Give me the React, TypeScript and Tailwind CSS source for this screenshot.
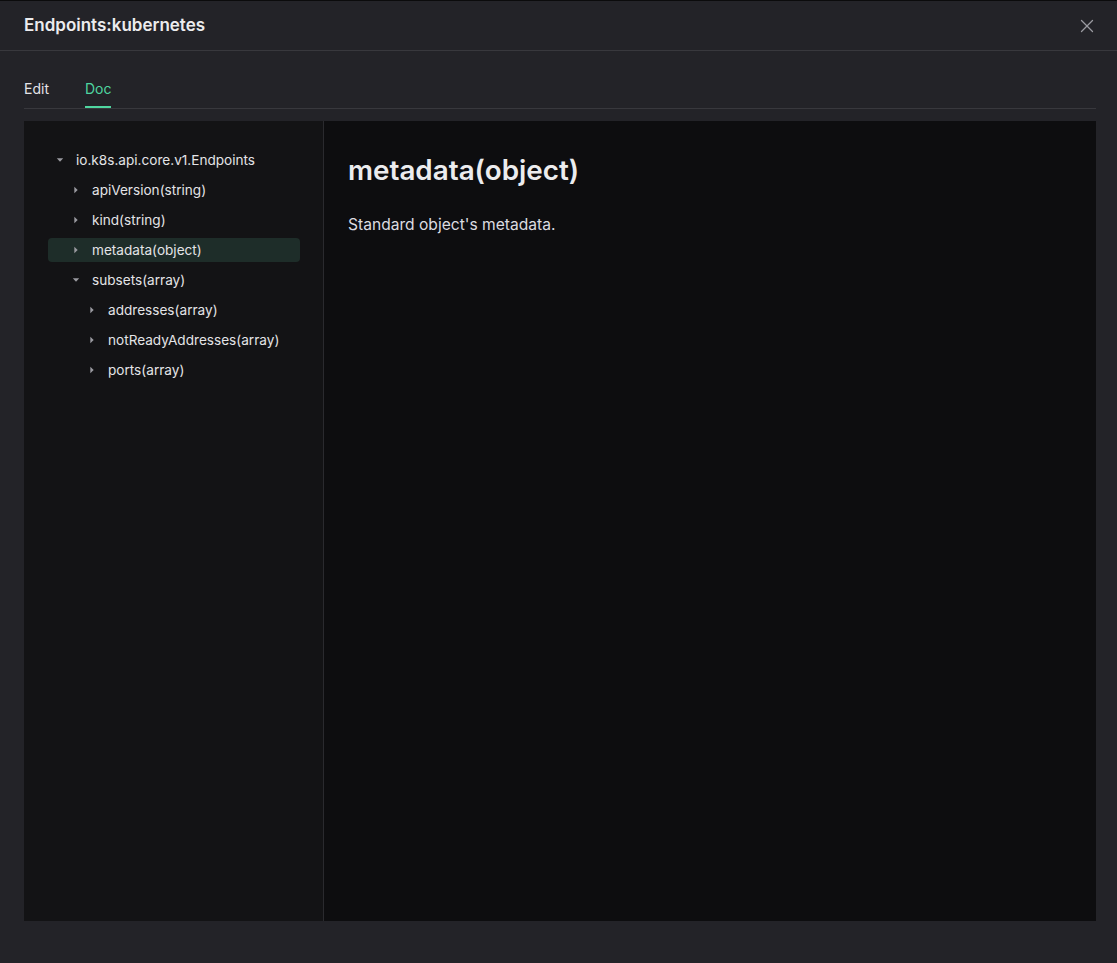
import { X } from "lucide-react"

type Node = { label: string; depth: number; open?: boolean; selected?: boolean }

const nodes: Node[] = [
  { label: "io.k8s.api.core.v1.Endpoints", depth: 0, open: true },
  { label: "apiVersion(string)", depth: 1 },
  { label: "kind(string)", depth: 1 },
  { label: "metadata(object)", depth: 1, selected: true },
  { label: "subsets(array)", depth: 1, open: true },
  { label: "addresses(array)", depth: 2 },
  { label: "notReadyAddresses(array)", depth: 2 },
  { label: "ports(array)", depth: 2 },
]

const Caret = ({ open }: { open?: boolean }) => (
  <svg width="16" height="16" viewBox="0 0 16 16" className="shrink-0">
    {open ? (
      <path d="M4.8 6.3h6.4L8 9.7z" fill="#9a9aa0" />
    ) : (
      <path d="M6.3 4.8v6.4L9.7 8z" fill="#9a9aa0" />
    )}
  </svg>
)

const TreeRow = ({ node }: { node: Node }) => (
  <div className="h-[30px] flex items-center">
    <div
      className={`flex items-center gap-2 h-6 w-[252px] rounded-sm ${
        node.selected ? "bg-[#1e2d29]" : ""
      }`}
      style={{ paddingLeft: 4 + node.depth * 16 }}
    >
      <Caret open={node.open} />
      <span className="text-[13.6px] text-[#e4e4e7]">{node.label}</span>
    </div>
  </div>
)

export default function App() {
  return (
    <div
      className="w-[1117px] h-[963px] bg-[#232328] border-t border-[#0b0b0c] flex flex-col"
      style={{ fontFamily: "Inter, 'Noto Sans', sans-serif" }}
    >
      <header className="h-[50px] shrink-0 flex items-center justify-between pl-6 pr-[19px] border-b border-[#38383d]">
        <h1 className="text-[17px] font-semibold text-[#ececee]">Endpoints:kubernetes</h1>
        <X size={22} strokeWidth={1.4} className="text-[#9a9aa0]" />
      </header>

      <div className="pl-6 pr-[21px] pt-[22px] flex-1 flex flex-col">
        <nav className="flex gap-9 border-b border-[#38383d] h-[36px]">
          <button className="text-[14px] text-[#e4e4e7] h-full flex items-start pt-[5px]">Edit</button>
          <button className="text-[14px] text-[#4fd6a0] h-full flex items-start pt-[5px] border-b-2 border-[#4fd6a0] mb-[-1px]">
            Doc
          </button>
        </nav>

        <div className="mt-3 h-[800px] flex">
          <aside className="w-[300px] bg-[#131315] border-r border-[#2a2a2e] pt-6 pl-6">
            {nodes.map((n) => (
              <TreeRow key={n.label} node={n} />
            ))}
          </aside>
          <main className="flex-1 bg-[#0d0d0f] px-6 pt-[31px]">
            <h2 className="text-[27.8px] font-semibold text-[#ececee] leading-9">metadata(object)</h2>
            <p className="mt-[25px] text-[15.6px] text-[#dcdce0]">Standard object's metadata.</p>
          </main>
        </div>
      </div>
    </div>
  )
}
